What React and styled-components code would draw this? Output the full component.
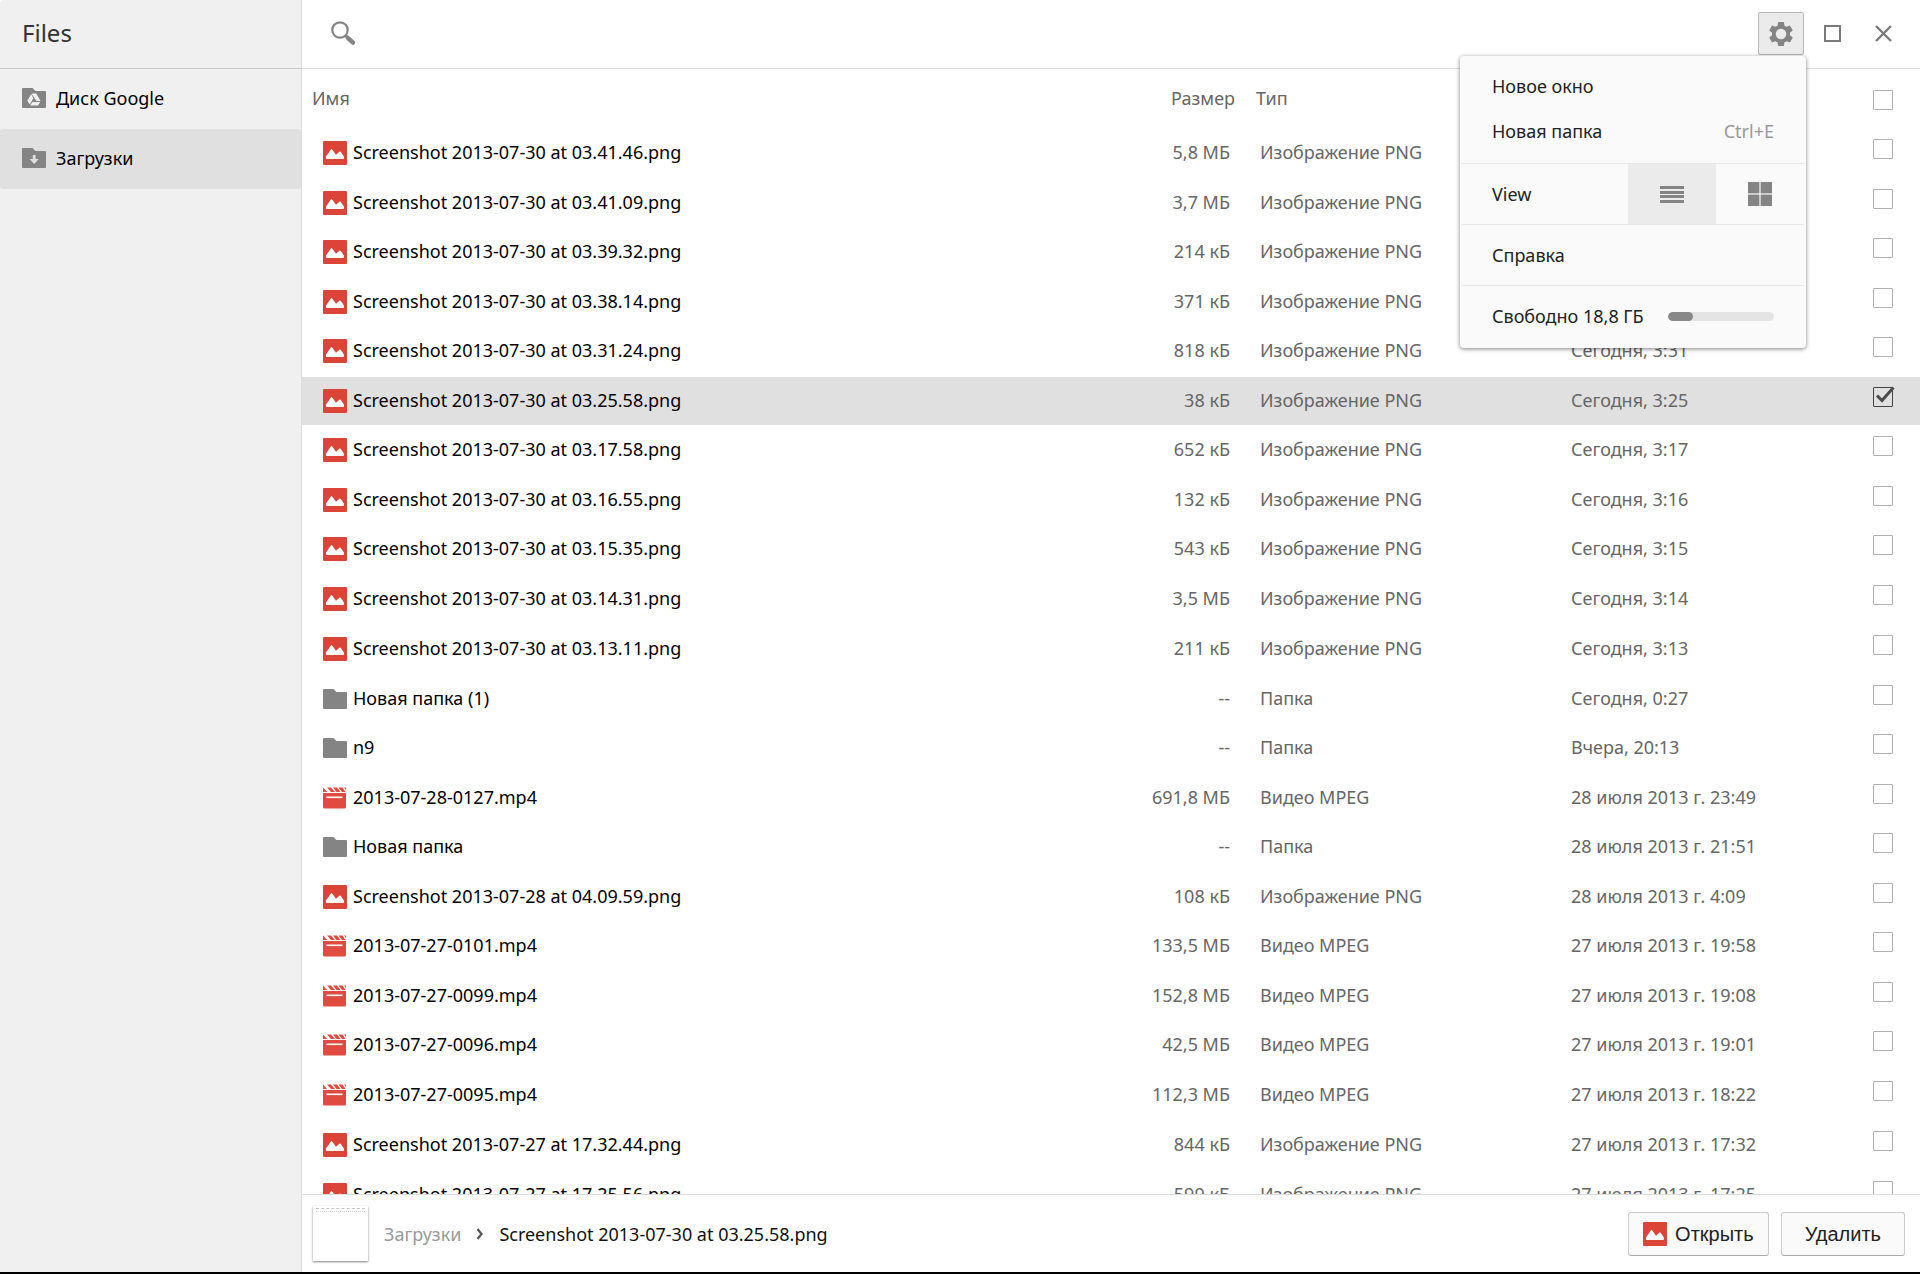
import React, { useState } from "react";
import styled, { createGlobalStyle, css } from "styled-components";

const GlobalStyle = createGlobalStyle`
  * {
    box-sizing: border-box;
  }
  body {
    margin: 0;
    background-color: #ffffff;
    font-family: "Noto Sans", "Open Sans", sans-serif;
    font-size: 18px;
    line-height: 24px;
    color: #000000;
  }
  button {
    font-family: inherit;
    font-size: inherit;
    line-height: inherit;
    color: inherit;
    cursor: pointer;
  }
`;

const Window = styled.div`
  display: flex;
  height: 100vh;
  overflow: hidden;
  border-bottom: 2px solid #000000;
  border-radius: 4px 4px 0 0;
`;

const Sidebar = styled.nav`
  flex: none;
  width: 302px;
  background-color: #f0f0f0;
  border-right: 1px solid #dcdcdc;
`;

const AppTitle = styled.h1`
  display: flex;
  align-items: center;
  height: 69px;
  margin: 0;
  padding: 0 22px 2px;
  border-bottom: 1px solid #cccccc;
  font-size: 24px;
  font-weight: 400;
  color: #333333;
`;

const SidebarItem = styled.a`
  display: flex;
  align-items: center;
  gap: 10px;
  height: 60px;
  padding: 0 22px 2px;
  border-radius: 3px;
  background-color: ${({ $active }) => ($active ? "#e0e0e0" : "transparent")};
  color: #000000;
  text-decoration: none;
`;

const Main = styled.main`
  display: flex;
  flex: 1;
  flex-direction: column;
  min-width: 0;
`;

const Toolbar = styled.header`
  display: flex;
  flex: none;
  justify-content: space-between;
  height: 69px;
  padding: 12px 14px 0 18px;
  border-bottom: 1px solid #dddddd;
`;

const WindowButtons = styled.div`
  display: flex;
  gap: 5px;
`;

const IconButton = styled.button`
  display: flex;
  justify-content: center;
  align-items: center;
  width: 46px;
  height: 43px;
  padding: 0;
  background: none;
  border: 1px solid transparent;
  border-radius: 2px;
  ${({ $pressed }) =>
    $pressed &&
    css`
      background-color: #ebebeb;
      border-color: #b8b8b8;
    `}
`;

const MenuAnchor = styled.div`
  position: relative;
`;

const Menu = styled.div`
  position: absolute;
  top: 44px;
  right: -2px;
  z-index: 10;
  width: 346px;
  padding: 0 2px 2px;
  background-color: #fafafa;
  border-radius: 4px;
  box-shadow: 0 1px 4px rgba(0, 0, 0, 0.5);
  color: #222222;
`;

const MenuGroup = styled.div`
  padding: ${({ $pad }) => $pad || "0"};
  & + & {
    border-top: 1px solid #e6e6e6;
  }
`;

const MenuItem = styled.button`
  display: flex;
  justify-content: space-between;
  align-items: center;
  width: 100%;
  height: ${({ $tall }) => ($tall ? "60px" : "45px")};
  padding: 0 30px;
  background: none;
  border: none;
`;

const Shortcut = styled.span`
  color: #999999;
`;

const MenuRow = styled.div`
  display: flex;
  align-items: center;
  height: 60px;
  padding-left: 30px;
`;

const ViewLabel = styled.span`
  flex: 1;
`;

const ViewButton = styled.button`
  display: flex;
  justify-content: center;
  align-items: center;
  width: 88px;
  height: 60px;
  padding: 0;
  background-color: ${({ $active }) => ($active ? "#ebebeb" : "transparent")};
  border: none;
`;

const SpaceBar = styled.div`
  flex: 1;
  height: 9px;
  margin: 0 30px 0 24px;
  overflow: hidden;
  border-radius: 5px;
  background-color: #e4e4e4;
`;

const SpaceUsed = styled.div`
  height: 100%;
  border-radius: 5px;
  background-color: #888888;
`;

const FileArea = styled.section`
  flex: 1;
  min-height: 0;
  overflow: hidden;
`;

const Table = styled.table`
  width: 100%;
  table-layout: fixed;
  border-collapse: separate;
  border-spacing: 0;
`;

const HeadCell = styled.th`
  width: ${({ $width }) => $width || "auto"};
  height: 60px;
  padding: ${({ $pad }) => $pad};
  font-weight: 400;
  text-align: ${({ $align }) => $align || "left"};
  color: #666666;
`;

const Cell = styled.td`
  padding: ${({ $pad }) => $pad};
  text-align: ${({ $align }) => $align || "left"};
  white-space: nowrap;
  color: #666666;
`;

const Row = styled.tr`
  & > td {
    height: 50px;
    border-bottom: 2px solid transparent;
    background-clip: padding-box;
    background-color: ${({ $selected }) => ($selected ? "#e0e0e0" : "#ffffff")};
  }
  &:nth-child(even):not(:nth-child(10n)) > td {
    height: 49px;
    border-bottom-width: 1px;
  }
`;

const FileName = styled.div`
  display: flex;
  align-items: center;
  gap: 6px;
  color: #000000;
`;

const FileLabel = styled.span`
  padding-bottom: 2px;
`;

const CheckLabel = styled.label`
  display: block;
  position: relative;
  width: 20px;
  height: 20px;
`;

const CheckBox = styled.input`
  display: block;
  appearance: none;
  width: 20px;
  height: 20px;
  margin: 0;
  border: 1px solid #b0b0b0;
  border-radius: 1px;
  &:checked {
    border-color: #444444;
  }
`;

const CheckMark = styled.svg`
  position: absolute;
  top: -1px;
  left: 2px;
  pointer-events: none;
`;

const Footer = styled.footer`
  display: flex;
  flex: none;
  align-items: center;
  height: 78px;
  padding: 0 15px 0 11px;
  border-top: 1px solid #dddddd;
`;

const Thumbnail = styled.div`
  width: 55px;
  height: 55px;
  margin-right: 16px;
  padding: 2px 3px;
  background-color: #ffffff;
  box-shadow: 0 1px 2px rgba(0, 0, 0, 0.5);
`;

const ThumbStrip = styled.div`
  height: 4px;
  border-bottom: 1px dotted #d0d0d0;
  border-top: 1px dashed #c4c4c4;
`;

const Breadcrumbs = styled.div`
  display: flex;
  flex: 1;
  align-items: center;
  gap: 15px;
  color: #111111;
`;

const Crumb = styled.a`
  color: #999999;
  text-decoration: none;
`;

const ActionButton = styled.button`
  display: flex;
  justify-content: center;
  align-items: center;
  gap: 8px;
  height: 44px;
  margin-left: 12px;
  padding: ${({ $pad }) => $pad};
  background-color: #fafafa;
  border: 1px solid #cccccc;
  border-bottom-color: #aaaaaa;
  border-radius: 3px;
  font-family: "Liberation Sans", Arial, sans-serif;
  font-size: 20px;
  color: #222222;
`;

const ImageIcon = () => (
  <svg width="24" height="24" viewBox="0 0 24 24">
    <rect width="24" height="24" rx="1" fill="#db4437" />
    <path
      d="M3 15.5 8 8.3Q8.5 7.7 9 8.3L13 13.8 16.4 10.7Q17 10.2 17.6 10.8L21 15.5V17.3Q21 18 20.3 18H3.7Q3 18 3 17.3Z"
      fill="#ffffff"
    />
  </svg>
);

const FolderIcon = ({ children }) => (
  <svg width="24" height="20" viewBox="0 0 24 20">
    <path
      d="M1 0H10.5L13.5 3H23Q24 3 24 4V19Q24 20 23 20H1Q0 20 0 19V1Q0 0 1 0Z"
      fill="#848484"
    />
    {children}
  </svg>
);

const VideoIcon = () => (
  <svg width="24" height="22" viewBox="0 0 24 22">
    <path
      d="M0 0.5 4.2 5H0ZM4 0.5H8L12 5H8ZM10 0.5H14L17.5 5H13.5ZM15.5 0.5H19.5L22.5 5H19ZM21 0.5H23V3Z"
      fill="#e04a3f"
    />
    <path d="M0 6H23V20Q23 21.5 21.5 21.5H1.5Q0 21.5 0 20Z" fill="#e04a3f" />
    <path d="M3.5 10.3H19.5" stroke="#ffffff" strokeWidth="1.6" />
  </svg>
);

const fileIcons = {
  image: <ImageIcon />,
  folder: <FolderIcon />,
  video: <VideoIcon />,
};

const fileTypes = {
  image: "Изображение PNG",
  folder: "Папка",
  video: "Видео MPEG",
};

const files = [
  ["image", "Screenshot 2013-07-30 at 03.41.46.png", "5,8 МБ", "Сегодня, 3:41"],
  ["image", "Screenshot 2013-07-30 at 03.41.09.png", "3,7 МБ", "Сегодня, 3:41"],
  ["image", "Screenshot 2013-07-30 at 03.39.32.png", "214 кБ", "Сегодня, 3:39"],
  ["image", "Screenshot 2013-07-30 at 03.38.14.png", "371 кБ", "Сегодня, 3:38"],
  ["image", "Screenshot 2013-07-30 at 03.31.24.png", "818 кБ", "Сегодня, 3:31"],
  ["image", "Screenshot 2013-07-30 at 03.25.58.png", "38 кБ", "Сегодня, 3:25"],
  ["image", "Screenshot 2013-07-30 at 03.17.58.png", "652 кБ", "Сегодня, 3:17"],
  ["image", "Screenshot 2013-07-30 at 03.16.55.png", "132 кБ", "Сегодня, 3:16"],
  ["image", "Screenshot 2013-07-30 at 03.15.35.png", "543 кБ", "Сегодня, 3:15"],
  ["image", "Screenshot 2013-07-30 at 03.14.31.png", "3,5 МБ", "Сегодня, 3:14"],
  ["image", "Screenshot 2013-07-30 at 03.13.11.png", "211 кБ", "Сегодня, 3:13"],
  ["folder", "Новая папка (1)", "--", "Сегодня, 0:27"],
  ["folder", "n9", "--", "Вчера, 20:13"],
  ["video", "2013-07-28-0127.mp4", "691,8 МБ", "28 июля 2013 г. 23:49"],
  ["folder", "Новая папка", "--", "28 июля 2013 г. 21:51"],
  ["image", "Screenshot 2013-07-28 at 04.09.59.png", "108 кБ", "28 июля 2013 г. 4:09"],
  ["video", "2013-07-27-0101.mp4", "133,5 МБ", "27 июля 2013 г. 19:58"],
  ["video", "2013-07-27-0099.mp4", "152,8 МБ", "27 июля 2013 г. 19:08"],
  ["video", "2013-07-27-0096.mp4", "42,5 МБ", "27 июля 2013 г. 19:01"],
  ["video", "2013-07-27-0095.mp4", "112,3 МБ", "27 июля 2013 г. 18:22"],
  ["image", "Screenshot 2013-07-27 at 17.32.44.png", "844 кБ", "27 июля 2013 г. 17:32"],
  ["image", "Screenshot 2013-07-27 at 17.25.56.png", "599 кБ", "27 июля 2013 г. 17:25"],
];

function Check({ label, checked, onChange }) {
  return (
    <CheckLabel>
      <CheckBox
        type="checkbox"
        aria-label={label}
        checked={checked}
        onChange={onChange}
      />
      {checked && (
        <CheckMark width="20" height="18" viewBox="0 0 20 18">
          <path
            d="M2 9.5 7 14.5 18.5 1.5"
            fill="none"
            stroke="#4c4c4c"
            strokeWidth="3"
          />
        </CheckMark>
      )}
    </CheckLabel>
  );
}

function SettingsMenu() {
  return (
    <Menu>
      <MenuGroup $pad="7px 0 10px">
        <MenuItem>Новое окно</MenuItem>
        <MenuItem>
          Новая папка <Shortcut>Ctrl+E</Shortcut>
        </MenuItem>
      </MenuGroup>
      <MenuGroup>
        <MenuRow>
          <ViewLabel>View</ViewLabel>
          <ViewButton $active aria-label="List">
            <svg width="24" height="17" viewBox="0 0 24 17" fill="#848484">
              <rect y="0" width="24" height="3" />
              <rect y="5" width="24" height="3" />
              <rect y="9" width="24" height="3" />
              <rect y="14" width="24" height="3" />
            </svg>
          </ViewButton>
          <ViewButton aria-label="Grid">
            <svg width="24" height="24" viewBox="0 0 24 24" fill="#848484">
              <rect width="11.4" height="11.4" />
              <rect x="12.6" width="11.4" height="11.4" />
              <rect y="12.6" width="11.4" height="11.4" />
              <rect x="12.6" y="12.6" width="11.4" height="11.4" />
            </svg>
          </ViewButton>
        </MenuRow>
      </MenuGroup>
      <MenuGroup>
        <MenuItem $tall>Справка</MenuItem>
      </MenuGroup>
      <MenuGroup>
        <MenuRow>
          Свободно 18,8 ГБ
          <SpaceBar>
            <SpaceUsed style={{ width: "24%" }} />
          </SpaceBar>
        </MenuRow>
      </MenuGroup>
    </Menu>
  );
}

function App() {
  const [selected, setSelected] = useState([5]);

  const toggle = (index) =>
    setSelected((prev) =>
      prev.includes(index) ? prev.filter((i) => i !== index) : [...prev, index]
    );

  const toggleAll = () =>
    setSelected((prev) =>
      prev.length === files.length ? [] : files.map((_, i) => i)
    );

  return (
    <Window>
      <GlobalStyle />
      <Sidebar>
        <AppTitle>Files</AppTitle>
        <SidebarItem href="#drive">
          <FolderIcon>
            <path
              d="M9.4 5.5H14.2L18.6 13H14.5L10.4 6.9ZM9 6.3 11.4 10.2 7.7 16.6 5.4 12.7ZM10.3 13.9H18.2L16 17.5H8.2Z"
              fill="#f0f0f0"
            />
          </FolderIcon>
          Диск Google
        </SidebarItem>
        <SidebarItem href="#downloads" $active>
          <FolderIcon>
            <path d="M10.8 7H13.6V11H16.8L12.2 16 7.6 11H10.8Z" fill="#e0e0e0" />
          </FolderIcon>
          Загрузки
        </SidebarItem>
      </Sidebar>
      <Main>
        <Toolbar>
          <IconButton aria-label="Search">
            <svg width="26" height="26" viewBox="0 1 26 26" fill="none">
              <circle cx="10" cy="10" r="7.7" stroke="#848484" strokeWidth="2.2" />
              <path d="M15.5 15.5 18 18" stroke="#848484" strokeWidth="2.6" />
              <path
                d="M17.8 17.8 23 22.6"
                stroke="#848484"
                strokeWidth="4.4"
                strokeLinecap="round"
              />
            </svg>
          </IconButton>
          <WindowButtons>
            <MenuAnchor>
              <IconButton $pressed aria-label="Settings">
                <svg width="24" height="24" viewBox="2 2 20 20">
                  <path
                    fill="#848484"
                    fillRule="evenodd"
                    d="M19.43 12.98c.04-.32.07-.64.07-.98s-.03-.66-.07-.98l2.11-1.65c.19-.15.24-.42.12-.64l-2-3.46c-.12-.22-.39-.3-.61-.22l-2.49 1c-.52-.4-1.08-.73-1.69-.98l-.38-2.65C14.46 2.18 14.25 2 14 2h-4c-.25 0-.46.18-.49.42l-.38 2.65c-.61.25-1.17.59-1.69.98l-2.49-1c-.23-.09-.49 0-.61.22l-2 3.46c-.13.22-.07.49.12.64l2.11 1.65c-.04.32-.07.65-.07.98s.03.66.07.98l-2.11 1.65c-.19.15-.24.42-.12.64l2 3.46c.12.22.39.3.61.22l2.49-1c.52.4 1.08.73 1.69.98l.38 2.65c.03.24.24.42.49.42h4c.25 0 .46-.18.49-.42l.38-2.65c.61-.25 1.17-.59 1.69-.98l2.49 1c.23.09.49 0 .61-.22l2-3.46c.12-.22.07-.49-.12-.64l-2.11-1.65zM12 16.4a4.4 4.4 0 1 1 0-8.8 4.4 4.4 0 0 1 0 8.8z"
                  />
                </svg>
              </IconButton>
              <SettingsMenu />
            </MenuAnchor>
            <IconButton aria-label="Maximize">
              <svg width="17" height="17" viewBox="0 0 17 17">
                <rect
                  x="1"
                  y="1"
                  width="15"
                  height="15"
                  fill="none"
                  stroke="#7a7a7a"
                  strokeWidth="2"
                />
              </svg>
            </IconButton>
            <IconButton aria-label="Close">
              <svg width="17" height="17" viewBox="0 0 17 17">
                <path d="M1 1 16 16M16 1 1 16" stroke="#7a7a7a" strokeWidth="2.4" />
              </svg>
            </IconButton>
          </WindowButtons>
        </Toolbar>
        <FileArea>
          <Table>
            <thead>
              <tr>
                <HeadCell $pad="0 0 2px 10px">Имя</HeadCell>
                <HeadCell $width="195px" $pad="0 10px 2px 0" $align="right">
                  Размер
                </HeadCell>
                <HeadCell $width="311px" $pad="0 0 2px 11px">
                  Тип
                </HeadCell>
                <HeadCell $width="294px" />
                <HeadCell $width="70px" $pad="2px 0 0 23px">
                  <Check
                    label="Select all"
                    checked={selected.length === files.length}
                    onChange={toggleAll}
                  />
                </HeadCell>
              </tr>
            </thead>
            <tbody>
              {files.map(([kind, name, size, date], index) => (
                <Row key={name} $selected={selected.includes(index)}>
                  <Cell $pad="0 0 0 21px">
                    <FileName>
                      {fileIcons[kind]}
                      <FileLabel>{name}</FileLabel>
                    </FileName>
                  </Cell>
                  <Cell $pad="0 15px 2px 0" $align="right">
                    {size}
                  </Cell>
                  <Cell $pad="0 0 2px 15px">{fileTypes[kind]}</Cell>
                  <Cell $pad="0 0 2px 15px">{date}</Cell>
                  <Cell $pad="0 0 8px 23px">
                    <Check
                      label={name}
                      checked={selected.includes(index)}
                      onChange={() => toggle(index)}
                    />
                  </Cell>
                </Row>
              ))}
            </tbody>
          </Table>
        </FileArea>
        <Footer>
          <Thumbnail>
            <ThumbStrip />
          </Thumbnail>
          <Breadcrumbs>
            <Crumb href="#downloads">Загрузки</Crumb>
            <svg width="8" height="12" viewBox="0 0 8 12" fill="none">
              <path d="M1.5 1 5.5 6 1.5 11" stroke="#555555" strokeWidth="2.2" />
            </svg>
            <span>Screenshot 2013-07-30 at 03.25.58.png</span>
          </Breadcrumbs>
          <ActionButton $pad="0 14px">
            <ImageIcon />
            Открыть
          </ActionButton>
          <ActionButton $pad="0 23px">Удалить</ActionButton>
        </Footer>
      </Main>
    </Window>
  );
}

export default App;
